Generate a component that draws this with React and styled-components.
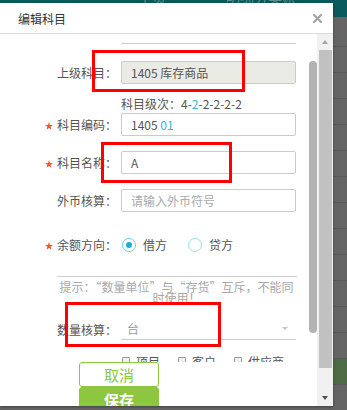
import styled, { createGlobalStyle } from 'styled-components'

const GlobalStyle = createGlobalStyle`
    html, body {
        margin: 0;
        padding: 0;
    }
    body {
        font-family: "Noto Sans CJK SC", "Noto Sans", sans-serif;
        background: #656565;
    }
    * {
        box-sizing: border-box;
    }
`

const Page = styled.div`
    position: relative;
    width: 347px;
    height: 410px;
    overflow: hidden;
    background: #656565;
`

const BgHeader = styled.div`
    display: flex;
    gap: 60px;
    height: 17px;
    padding-left: 138px;
    background: #0b5a5d;
    overflow: hidden;
`

const NavItem = styled.span`
    margin-top: -10px;
    font-size: 14px;
    line-height: 14px;
    color: #5d8e8f;
`

const BgRow = styled.div`
    height: ${({ $h }) => $h || 26}px;
    border-bottom: 1px solid #5a5a5a;
    background: ${({ $active }) => ($active ? '#4e6b45' : 'transparent')};
`

const Dialog = styled.div`
    position: absolute;
    top: 3px;
    left: 0;
    z-index: 1;
    display: flex;
    flex-direction: column;
    width: 333px;
    height: 403px;
    background: #fff;
    box-shadow: 0 1px 3px rgba(0, 0, 0, 0.35);
    overflow: hidden;
`

const Header = styled.div`
    display: flex;
    align-items: center;
    justify-content: space-between;
    flex-shrink: 0;
    height: 31px;
    padding: 0 11px 0 18px;
    border-bottom: 1px solid #dcdcdc;
    font-size: 12px;
    color: #333;
`

const Body = styled.div`
    display: flex;
    flex: 1;
    overflow: hidden;
`

const Main = styled.div`
    display: flex;
    flex-direction: column;
    width: 317px;
`

const InnerScroll = styled.div`
    position: relative;
    flex-shrink: 0;
    height: 328px;
    overflow: hidden;
`

const InnerThumb = styled.div`
    position: absolute;
    top: 27px;
    right: 0;
    width: 8px;
    height: 272px;
    border-radius: 4px;
    background: #b3b3b3;
`

const Row = styled.div`
    display: flex;
    align-items: center;
    height: ${({ $h }) => $h || 23}px;
    margin-top: ${({ $mt }) => $mt || 0}px;
`

const Label = styled.div`
    display: flex;
    align-items: center;
    justify-content: flex-end;
    flex-shrink: 0;
    width: 117px;
    margin-right: 4px;
    font-size: 12px;
    color: #555;
    white-space: nowrap;
`

const Star = styled.svg`
    width: 8px;
    height: 8px;
    margin: 2px 4px 0 0;
`

const FieldBox = styled.div`
    display: flex;
    align-items: center;
    width: 175px;
    height: 23px;
    padding: 0 9px;
    border: 1px solid #cbcbcb;
    border-radius: 2px;
    background: ${({ $disabled }) => ($disabled ? '#ebebe5' : '#fff')};
    font-size: 12px;
    color: ${({ $placeholder }) => ($placeholder ? '#aaa' : '#555')};
    white-space: nowrap;
`

const Accent = styled.span`
    color: #2fb4d9;
`

const LevelHint = styled.div`
    height: 16px;
    margin-top: ${({ $mt }) => $mt}px;
    padding-left: 121px;
    font-size: 12px;
    line-height: 16px;
    color: #555;
`

const UnderSelect = styled.div`
    display: flex;
    align-items: center;
    justify-content: space-between;
    width: 175px;
    height: ${({ $h }) => $h || 23}px;
    padding: 0 8px 0 6px;
    border-bottom: 1px solid #cdcdcd;
    font-size: 12px;
    color: #999;
`

const Caret = styled.span`
    width: 0;
    height: 0;
    border-left: 3px solid transparent;
    border-right: 3px solid transparent;
    border-top: 3px solid #c4c4c4;
`

const Options = styled.div`
    display: flex;
    align-items: center;
    gap: ${({ $gap }) => $gap}px;
    padding-left: 1px;
`

const OptionItem = styled.label`
    display: flex;
    align-items: center;
    gap: ${({ $gap }) => $gap}px;
    font-size: 12px;
    color: #555;
`

const RadioCircle = styled.span`
    display: flex;
    align-items: center;
    justify-content: center;
    width: 14px;
    height: 14px;
    border: 1px solid ${({ $checked }) => ($checked ? '#6ccfe8' : '#9adcee')};
    border-radius: 50%;

    &::after {
        content: '';
        display: ${({ $checked }) => ($checked ? 'block' : 'none')};
        width: 6px;
        height: 6px;
        border-radius: 50%;
        background: #1aafd8;
    }
`

const CheckBox = styled.span`
    width: 8px;
    height: 9px;
    border: 1px solid #9a9a9a;
    border-radius: 1px;
    background: #f0f0f0;
`

const Rule = styled.div`
    width: 240px;
    margin: 20px 0 0 57px;
    border-top: 1px solid #cfcfcf;
`

const Hint = styled.p`
    width: 241px;
    margin: 4px 0 0 56px;
    font-size: 12px;
    line-height: 11px;
    color: #a8a8a8;
    text-align: center;
    font-feature-settings: 'fwid' 1;
`

const Footer = styled.div`
    display: flex;
    flex-direction: column;
    padding-left: 79px;
`

const Button = styled.button`
    width: 80px;
    height: 25px;
    padding: 0;
    border: 1px solid #8dc63f;
    border-radius: 3px;
    background: ${({ $primary }) => ($primary ? '#8dc63f' : '#fff')};
    color: ${({ $primary }) => ($primary ? '#fff' : '#8dc63f')};
    font-family: inherit;
    font-size: 15px;
    line-height: 1;
    font-weight: ${({ $primary }) => ($primary ? 700 : 400)};
`

const Track = styled.div`
    display: flex;
    flex-direction: column;
    width: 16px;
    background: #f1f1f1;
`

const ArrowButton = styled.div`
    display: flex;
    align-items: center;
    justify-content: center;
    height: 16px;
`

const Arrow = styled.span`
    width: 0;
    height: 0;
    border-left: 3.5px solid transparent;
    border-right: 3.5px solid transparent;
    ${({ $up }) =>
        $up ? 'border-bottom: 4px solid #a3a3a3;' : 'border-top: 4px solid #505050;'}
`

const Thumb = styled.div`
    width: 13px;
    height: 318px;
    margin-left: 2px;
    background: #c1c1c1;
`

const TrackGap = styled.div`
    flex: 1;
`

const Mark = styled.div`
    position: absolute;
    z-index: 2;
    border: 3px solid #f00;
`

function RequiredStar() {
    return (
        <Star viewBox="0 0 10 10">
            <polygon points="5,0 6.2,3.6 10,3.7 7,6 8.1,9.7 5,7.5 1.9,9.7 3,6 0,3.7 3.8,3.6" fill="#ee5a24" />
        </Star>
    )
}

function CloseIcon() {
    return (
        <svg width="9" height="9" viewBox="0 0 9 9">
            <path d="M1 1 L8 8 M8 1 L1 8" stroke="#a3a3a3" strokeWidth="2.2" strokeLinecap="square" />
        </svg>
    )
}

const bgRows = Array.from({ length: 14 })

const marks = [
    { left: 92, top: 50, width: 153, height: 42 },
    { left: 101, top: 142, width: 131, height: 41 },
    { left: 65, top: 302, width: 156, height: 45 },
]

function App() {
    return (
        <>
            <GlobalStyle />
            <Page>
                <BgHeader>
                    <NavItem>主页</NavItem>
                    <NavItem>明细分类账</NavItem>
                </BgHeader>
                <BgRow $h={30} />
                {bgRows.map((_, i) => (
                    <BgRow key={i} $active={i === 12} />
                ))}

                <Dialog>
                    <Header>
                        <span>编辑科目</span>
                        <CloseIcon />
                    </Header>
                    <Body>
                        <Main>
                            <InnerScroll>
                                {/* bottom edge of the field above, scrolled out of view */}
                                <Row $mt={-13}>
                                    <Label />
                                    <UnderSelect />
                                </Row>
                                <Row $mt={17}>
                                    <Label>上级科目：</Label>
                                    <FieldBox $disabled>1405 库存商品</FieldBox>
                                </Row>
                                <LevelHint $mt={12}>
                                    科目级次：4-<Accent>2</Accent>-2-2-2-2
                                </LevelHint>
                                <Row $mt={1}>
                                    <Label>
                                        <RequiredStar />
                                        科目编码：
                                    </Label>
                                    <FieldBox>
                                        1405&nbsp;<Accent>01</Accent>
                                    </FieldBox>
                                </Row>
                                <Row $mt={15}>
                                    <Label>
                                        <RequiredStar />
                                        科目名称：
                                    </Label>
                                    <FieldBox>A</FieldBox>
                                </Row>
                                <Row $mt={15}>
                                    <Label>外币核算：</Label>
                                    <FieldBox $placeholder>请输入外币符号</FieldBox>
                                </Row>
                                <Row $mt={21}>
                                    <Label>
                                        <RequiredStar />
                                        余额方向：
                                    </Label>
                                    <Options $gap={21}>
                                        <OptionItem $gap={7}>
                                            <RadioCircle $checked />
                                            借方
                                        </OptionItem>
                                        <OptionItem $gap={7}>
                                            <RadioCircle />
                                            贷方
                                        </OptionItem>
                                    </Options>
                                </Row>
                                <Rule />
                                <Hint>提示：“数量单位”与“存货”互斥，不能同时使用！</Hint>
                                <Row $mt={15} $h={22}>
                                    <Label>数量核算：</Label>
                                    <UnderSelect $h={22}>
                                        台
                                        <Caret />
                                    </UnderSelect>
                                </Row>
                                <Row $mt={14} $h={14}>
                                    <Label />
                                    <Options $gap={18}>
                                        <OptionItem $gap={6}>
                                            <CheckBox />
                                            项目
                                        </OptionItem>
                                        <OptionItem $gap={6}>
                                            <CheckBox />
                                            客户
                                        </OptionItem>
                                        <OptionItem $gap={6}>
                                            <CheckBox />
                                            供应商
                                        </OptionItem>
                                    </Options>
                                </Row>
                                <InnerThumb />
                            </InnerScroll>
                            <Footer>
                                <Button>取消</Button>
                                <Button $primary>保存</Button>
                            </Footer>
                        </Main>
                        <Track>
                            <ArrowButton>
                                <Arrow $up />
                            </ArrowButton>
                            <Thumb />
                            <TrackGap />
                            <ArrowButton>
                                <Arrow />
                            </ArrowButton>
                        </Track>
                    </Body>
                </Dialog>

                {marks.map((m, i) => (
                    <Mark key={i} style={m} />
                ))}
            </Page>
        </>
    )
}

export default App
